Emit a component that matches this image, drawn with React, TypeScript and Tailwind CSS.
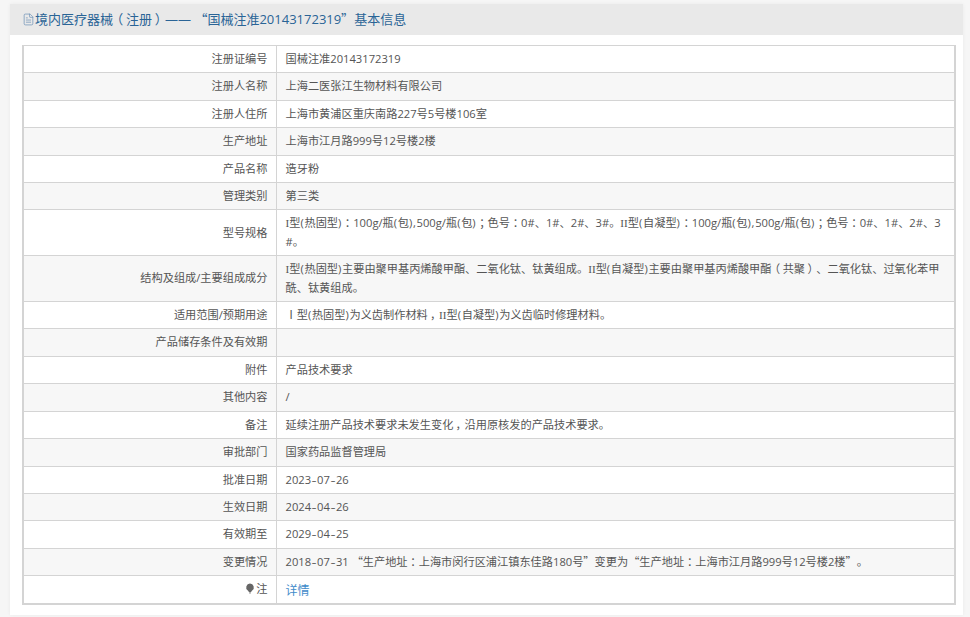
import { FileText } from "lucide-react";

type Row = { label: string; value: string; link?: boolean; note?: boolean };

const rows: Row[] = [
  { label: "注册证编号", value: "国械注准20143172319" },
  { label: "注册人名称", value: "上海二医张江生物材料有限公司" },
  { label: "注册人住所", value: "上海市黄浦区重庆南路227号5号楼106室" },
  { label: "生产地址", value: "上海市江月路999号12号楼2楼" },
  { label: "产品名称", value: "造牙粉" },
  { label: "管理类别", value: "第三类" },
  {
    label: "型号规格",
    value: "I型(热固型)：100g/瓶(包),500g/瓶(包)；色号：0#、1#、2#、3#。II型(自凝型)：100g/瓶(包),500g/瓶(包)；色号：0#、1#、2#、3#。",
  },
  {
    label: "结构及组成/主要组成成分",
    value: "I型(热固型)主要由聚甲基丙烯酸甲酯、二氧化钛、钛黄组成。II型(自凝型)主要由聚甲基丙烯酸甲酯（共聚）、二氧化钛、过氧化苯甲酰、钛黄组成。",
  },
  { label: "适用范围/预期用途", value: "Ⅰ型(热固型)为义齿制作材料，II型(自凝型)为义齿临时修理材料。" },
  { label: "产品储存条件及有效期", value: "" },
  { label: "附件", value: "产品技术要求" },
  { label: "其他内容", value: "/" },
  { label: "备注", value: "延续注册产品技术要求未发生变化，沿用原核发的产品技术要求。" },
  { label: "审批部门", value: "国家药品监督管理局" },
  { label: "批准日期", value: "2023-07-26" },
  { label: "生效日期", value: "2024-04-26" },
  { label: "有效期至", value: "2029-04-25" },
  { label: "变更情况", value: "2018-07-31 “生产地址：上海市闵行区浦江镇东佳路180号”变更为“生产地址：上海市江月路999号12号楼2楼”。" },
  { label: "注", value: "详情", link: true, note: true },
];

// the screenshot's font centres full-width punctuation and has a wide hyphen and a serif I
function Rich({ text }: { text: string }) {
  const parts = text.split(/([：；，（）“”\-I(),])/);
  return (
    <>
      {parts.map((part, i) => {
        if (part === "“") {
          return <span key={i} className="inline-block w-[1em] text-right font-['Noto_Sans_CJK_SC'] leading-none [font-feature-settings:'palt']">{part}</span>;
        }
        if (part === "”") {
          return <span key={i} className="inline-block w-[1em] text-left font-['Noto_Sans_CJK_SC'] leading-none [font-feature-settings:'palt']">{part}</span>;
        }
        if (part === "-") {
          return <span key={i} className="inline-block w-[6px] scale-x-[1.4] text-center leading-none">{part}</span>;
        }
        if (part === "I") {
          return <span key={i} className="font-['Liberation_Serif'] leading-none">{part}</span>;
        }
        if (part === "(" || part === ")" || part === ",") {
          return <span key={i} className="tracking-[0.7px]">{part}</span>;
        }
        if (part !== "" && "：；，（）".includes(part)) {
          return <span key={i} className="inline-block w-[1em] text-center font-['Noto_Sans_CJK_SC'] leading-none [font-feature-settings:'palt']">{part}</span>;
        }
        return part;
      })}
    </>
  );
}

export default function App() {
  return (
    <div className="h-[617px] w-[970px] overflow-hidden bg-[#f6f6f6] pt-1 pl-2.5 pr-[7px] font-['Open_Sans','Noto_Sans_CJK_SC',sans-serif] text-[11.2px] leading-[18.4px] text-[#555]">
      <div className="h-[611px] bg-white shadow-[0_0_4px_rgba(0,0,0,0.05)]">
        {/* Header */}
        <div className="flex h-[31px] items-center bg-[#e9e9e9] pl-3 text-[13px] text-[#2a6496]">
          <FileText size={13} strokeWidth={1.3} className="shrink-0 text-[#6a8fb5]" />
          <span>
            <Rich text="境内医疗器械（注册）—— “国械注准20143172319”基本信息" />
          </span>
        </div>

        {/* Info table */}
        <div className="px-3 pt-2.5">
          <table className="w-[934px] table-fixed border-collapse border-2 border-t border-[#d4d4d4]">
            <colgroup>
              <col className="w-[253px]" />
              <col />
            </colgroup>
            <tbody>
              {rows.map((row, index) => (
                <tr key={row.label} className={index % 2 === 1 ? "bg-[#f7f7f7]" : "bg-white"}>
                  <td className="border border-[#d4d4d4] px-2 py-1 text-right align-middle">
                    {row.note && (
                      <svg width="10" height="11" viewBox="0 0 10 11" className="mr-px inline-block align-[-1px]">
                        <path d="M5 0.5a3.8 3.8 0 0 1 2.2 6.9c-.6.5-.9 1-1 1.6H3.8c-.1-.6-.4-1.1-1-1.6A3.8 3.8 0 0 1 5 .5z" fill="#666" />
                        <rect x="4" y="9.3" width="2" height="1.2" fill="#999" />
                      </svg>
                    )}
                    {row.label}
                  </td>
                  <td className={"break-all border border-[#d4d4d4] pl-[9px] pr-2 align-middle " + (row.link ? "pt-1.5 pb-0.5 text-[12px] text-[#428bca]" : "py-1")}>
                    {row.value ? <Rich text={row.value} /> : "\u00a0"}
                  </td>
                </tr>
              ))}
            </tbody>
          </table>
        </div>
      </div>
    </div>
  );
}
